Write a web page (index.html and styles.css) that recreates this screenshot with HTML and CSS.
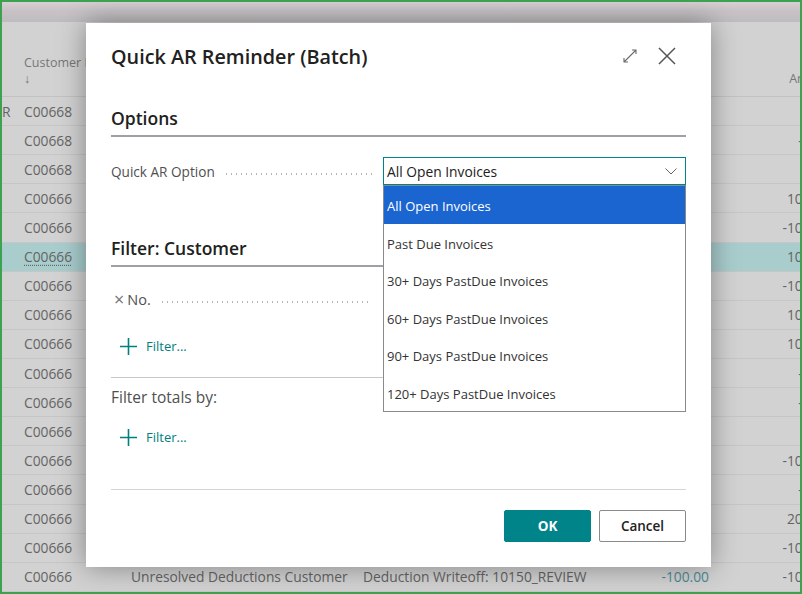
FILE: index.html
```html
<!DOCTYPE html>
<html lang="en">
<head>
    <meta charset="UTF-8">
    <title>Quick AR Reminder (Batch)</title>
    <link rel="stylesheet" href="styles.css">
</head>
<body>
    <div class="screen">
        <div class="topbar"></div>

        <div class="list">
            <div class="list-head">
                <div class="cell"></div>
                <div class="cell head-no">Customer No.<br>↓</div>
                <div class="cell">Name</div>
                <div class="cell">Description</div>
                <div class="cell num"></div>
                <div class="cell num head-amount">Amount</div>
            </div>
            <div class="row"><div class="cell">R</div><div class="cell">C00668</div><div class="cell"></div><div class="cell"></div><div class="cell num"></div><div class="cell num"></div></div>
            <div class="row"><div class="cell"></div><div class="cell">C00668</div><div class="cell"></div><div class="cell"></div><div class="cell num"></div><div class="cell num">-5.00</div></div>
            <div class="row"><div class="cell"></div><div class="cell">C00668</div><div class="cell"></div><div class="cell"></div><div class="cell num"></div><div class="cell num">0.00</div></div>
            <div class="row"><div class="cell"></div><div class="cell">C00666</div><div class="cell"></div><div class="cell"></div><div class="cell num"></div><div class="cell num">100.00</div></div>
            <div class="row"><div class="cell"></div><div class="cell">C00666</div><div class="cell"></div><div class="cell"></div><div class="cell num"></div><div class="cell num">-100.00</div></div>
            <div class="row selected"><div class="cell"></div><div class="cell link">C00666</div><div class="cell"></div><div class="cell"></div><div class="cell num"></div><div class="cell num">100.00</div></div>
            <div class="row"><div class="cell"></div><div class="cell">C00666</div><div class="cell"></div><div class="cell"></div><div class="cell num"></div><div class="cell num">-100.00</div></div>
            <div class="row"><div class="cell"></div><div class="cell">C00666</div><div class="cell"></div><div class="cell"></div><div class="cell num"></div><div class="cell num">100.00</div></div>
            <div class="row"><div class="cell"></div><div class="cell">C00666</div><div class="cell"></div><div class="cell"></div><div class="cell num"></div><div class="cell num">100.00</div></div>
            <div class="row"><div class="cell"></div><div class="cell">C00666</div><div class="cell"></div><div class="cell"></div><div class="cell num"></div><div class="cell num">-5.00</div></div>
            <div class="row"><div class="cell"></div><div class="cell">C00666</div><div class="cell"></div><div class="cell"></div><div class="cell num"></div><div class="cell num">-5.00</div></div>
            <div class="row"><div class="cell"></div><div class="cell">C00666</div><div class="cell"></div><div class="cell"></div><div class="cell num"></div><div class="cell num"></div></div>
            <div class="row"><div class="cell"></div><div class="cell">C00666</div><div class="cell"></div><div class="cell"></div><div class="cell num"></div><div class="cell num">-100.00</div></div>
            <div class="row"><div class="cell"></div><div class="cell">C00666</div><div class="cell"></div><div class="cell"></div><div class="cell num"></div><div class="cell num">-5.00</div></div>
            <div class="row"><div class="cell"></div><div class="cell">C00666</div><div class="cell"></div><div class="cell"></div><div class="cell num"></div><div class="cell num">200.00</div></div>
            <div class="row"><div class="cell"></div><div class="cell">C00666</div><div class="cell"></div><div class="cell"></div><div class="cell num"></div><div class="cell num">-100.00</div></div>
            <div class="row"><div class="cell"></div><div class="cell">C00666</div><div class="cell">Unresolved Deductions Customer</div><div class="cell">Deduction Writeoff: 10150_REVIEW</div><div class="cell num amount-link">-100.00</div><div class="cell num">-100.00</div></div>
        </div>

        <div class="dialog">
            <div class="dialog-head">
                <div class="dialog-title">Quick AR Reminder (Batch)</div>
                <div class="head-icons">
                    <svg class="icon" width="18" height="18" viewBox="0 0 18 18">
                        <path d="M3 15 L15 3 M11 3 H15 V7 M3 11 V15 H7" fill="none" stroke="#6a6a6a" stroke-width="1.1"/>
                    </svg>
                    <svg class="icon" width="18" height="18" viewBox="0 0 18 18">
                        <path d="M1 1 L17 17 M17 1 L1 17" fill="none" stroke="#555" stroke-width="1.5"/>
                    </svg>
                </div>
            </div>

            <div class="section-title">Options</div>
            <div class="field">
                <div class="field-label">Quick AR Option<span class="leader"></span></div>
                <div class="select">
                    <span class="select-value">All Open Invoices</span>
                    <svg width="12" height="7" viewBox="0 0 12 7">
                        <path d="M0.5 0.5 L6 6 L11.5 0.5" fill="none" stroke="#666" stroke-width="1"/>
                    </svg>
                </div>
            </div>

            <div class="section-title filter-title">Filter: Customer</div>
            <div class="field field-no">
                <div class="field-label"><span class="remove">×</span>No.<span class="leader"></span></div>
                <div class="input"></div>
            </div>
            <div class="add-filter">
                <svg width="17" height="17" viewBox="0 0 17 17">
                    <path d="M8.5 0 V17 M0 8.5 H17" stroke="#00807f" stroke-width="1.6"/>
                </svg>
                <span>Filter...</span>
            </div>
            <div class="divider"></div>
            <div class="sub-label">Filter totals by:</div>
            <div class="add-filter second">
                <svg width="17" height="17" viewBox="0 0 17 17">
                    <path d="M8.5 0 V17 M0 8.5 H17" stroke="#00807f" stroke-width="1.6"/>
                </svg>
                <span>Filter...</span>
            </div>
            <div class="divider bottom"></div>

            <div class="actions">
                <button class="btn btn-ok">OK</button>
                <button class="btn btn-cancel">Cancel</button>
            </div>

            <div class="options-list">
                <div class="opt active">All Open Invoices</div>
                <div class="opt">Past Due Invoices</div>
                <div class="opt">30+ Days PastDue Invoices</div>
                <div class="opt">60+ Days PastDue Invoices</div>
                <div class="opt">90+ Days PastDue Invoices</div>
                <div class="opt">120+ Days PastDue Invoices</div>
            </div>
        </div>
    </div>
</body>
</html>
```

FILE: styles.css
```css
body {
    margin: 0;
    font-family: "Open Sans", "Noto Sans", sans-serif;
}

.screen {
    position: relative;
    width: 802px;
    height: 594px;
    box-sizing: border-box;
    border: 2px solid #3ca24f;
    background: #d2d2d2;
    overflow: hidden;
}

.topbar {
    height: 20px;
    background: linear-gradient(#d6d0d4, #c8c2c7 45%, #bebdbe);
}

/* dimmed list behind the dialog */
.list-head, .row {
    display: grid;
    grid-template-columns: 22px 107px 232px 237px 109px 121px;
    width: 828px;
    color: #646464;
    font-size: 13.8px;
}

.list-head {
    height: 75px;
    box-sizing: border-box;
    border-bottom: 1px solid #c2c2c2;
    color: #767676;
    font-size: 12.5px;
}

.list-head .cell {
    align-self: end;
    padding-bottom: 9px;
    line-height: 16px;
}

.head-amount {
    margin-right: -6px;
}

.row {
    height: 29.12px;
    box-sizing: border-box;
    border-bottom: 1px solid #c6c6c6;
    align-items: center;
}

.row.selected {
    background: #a9cdcd;
}

.cell {
    white-space: nowrap;
    overflow: hidden;
}

.cell.num {
    text-align: right;
}

.cell.link {
    text-decoration: underline dotted;
    text-underline-offset: 3px;
}

.amount-link {
    color: #4b8b96;
}

/* dialog */
.dialog {
    position: absolute;
    left: 84px;
    top: 21px;
    width: 625px;
    box-sizing: border-box;
    padding: 18px 25px 25px;
    background: #fff;
    box-shadow: 0 0 26px rgba(0, 0, 0, 0.38);
    color: #212121;
}

.dialog-head {
    display: flex;
    align-items: center;
    height: 30px;
}

.dialog-title {
    flex: 1;
    font-size: 19.8px;
    font-weight: 600;
}

.head-icons {
    display: flex;
    gap: 19px;
    margin-right: 10px;
}

.section-title {
    margin-top: 35px;
    font-size: 17.5px;
    font-weight: 600;
    line-height: 24px;
    padding-bottom: 5px;
    border-bottom: 2px solid #a09fa6;
}

.filter-title {
    margin-top: 51px;
}

.field {
    display: flex;
    align-items: center;
    height: 28px;
    margin-top: 20px;
}

.field-no {
    height: 30px;
    margin-top: 17px;
}

.field-label {
    width: 272px;
    display: flex;
    align-items: center;
    color: #505050;
    font-size: 13.6px;
}

.field-no .field-label {
    font-size: 14.5px;
}

.remove {
    color: #777;
    font-size: 18px;
    line-height: 1;
    margin: 0 3px 0 3px;
}

.leader {
    flex: 1;
    height: 2px;
    margin: 5px 11px 0 9px;
    background: radial-gradient(circle, #b4b4b4 0.8px, transparent 1.1px) 0 0 / 5px 2px repeat-x;
}

.select {
    flex: 1;
    height: 28px;
    box-sizing: border-box;
    border: 1px solid #00848a;
    display: flex;
    align-items: center;
    padding: 0 8px 0 3px;
    font-size: 13.8px;
}

.select-value {
    flex: 1;
}

.input {
    flex: 1;
    height: 30px;
    box-sizing: border-box;
    border: 1px solid #8a8a8a;
}

.add-filter {
    display: flex;
    align-items: center;
    gap: 9px;
    height: 28px;
    margin-top: 18px;
    padding-left: 9px;
    color: #00807f;
    font-size: 13px;
}

.add-filter.second {
    margin-top: 16px;
}

.divider {
    margin-top: 17px;
    border-top: 1px solid #c8c8c8;
}

.divider.bottom {
    margin-top: 38px;
    border-top-color: #d4d4d4;
}

.sub-label {
    margin-top: 9px;
    line-height: 20px;
    color: #505050;
    font-size: 15.5px;
}

.actions {
    display: flex;
    justify-content: flex-end;
    gap: 8px;
    margin-top: 20px;
}

.btn {
    width: 87px;
    height: 32px;
    font-family: inherit;
    font-size: 13.5px;
    border-radius: 2px;
    cursor: pointer;
}

.btn-ok {
    background: #00848a;
    border: 1px solid #00848a;
    color: #fff;
    font-weight: 700;
}

.btn-cancel {
    background: #fff;
    border: 1px solid #8a8a8a;
    color: #212121;
    font-weight: 600;
}

/* open dropdown */
.options-list {
    position: absolute;
    left: 297px;
    top: 162px;
    width: 303px;
    box-sizing: border-box;
    border: 1px solid #8a8a8a;
    background: #fff;
}

.opt {
    height: 37.5px;
    box-sizing: border-box;
    display: flex;
    align-items: center;
    padding: 3px 0 0 3px;
    font-size: 13px;
    color: #333;
}

.opt.active {
    background: #1b65d1;
    color: #fff;
}
```
